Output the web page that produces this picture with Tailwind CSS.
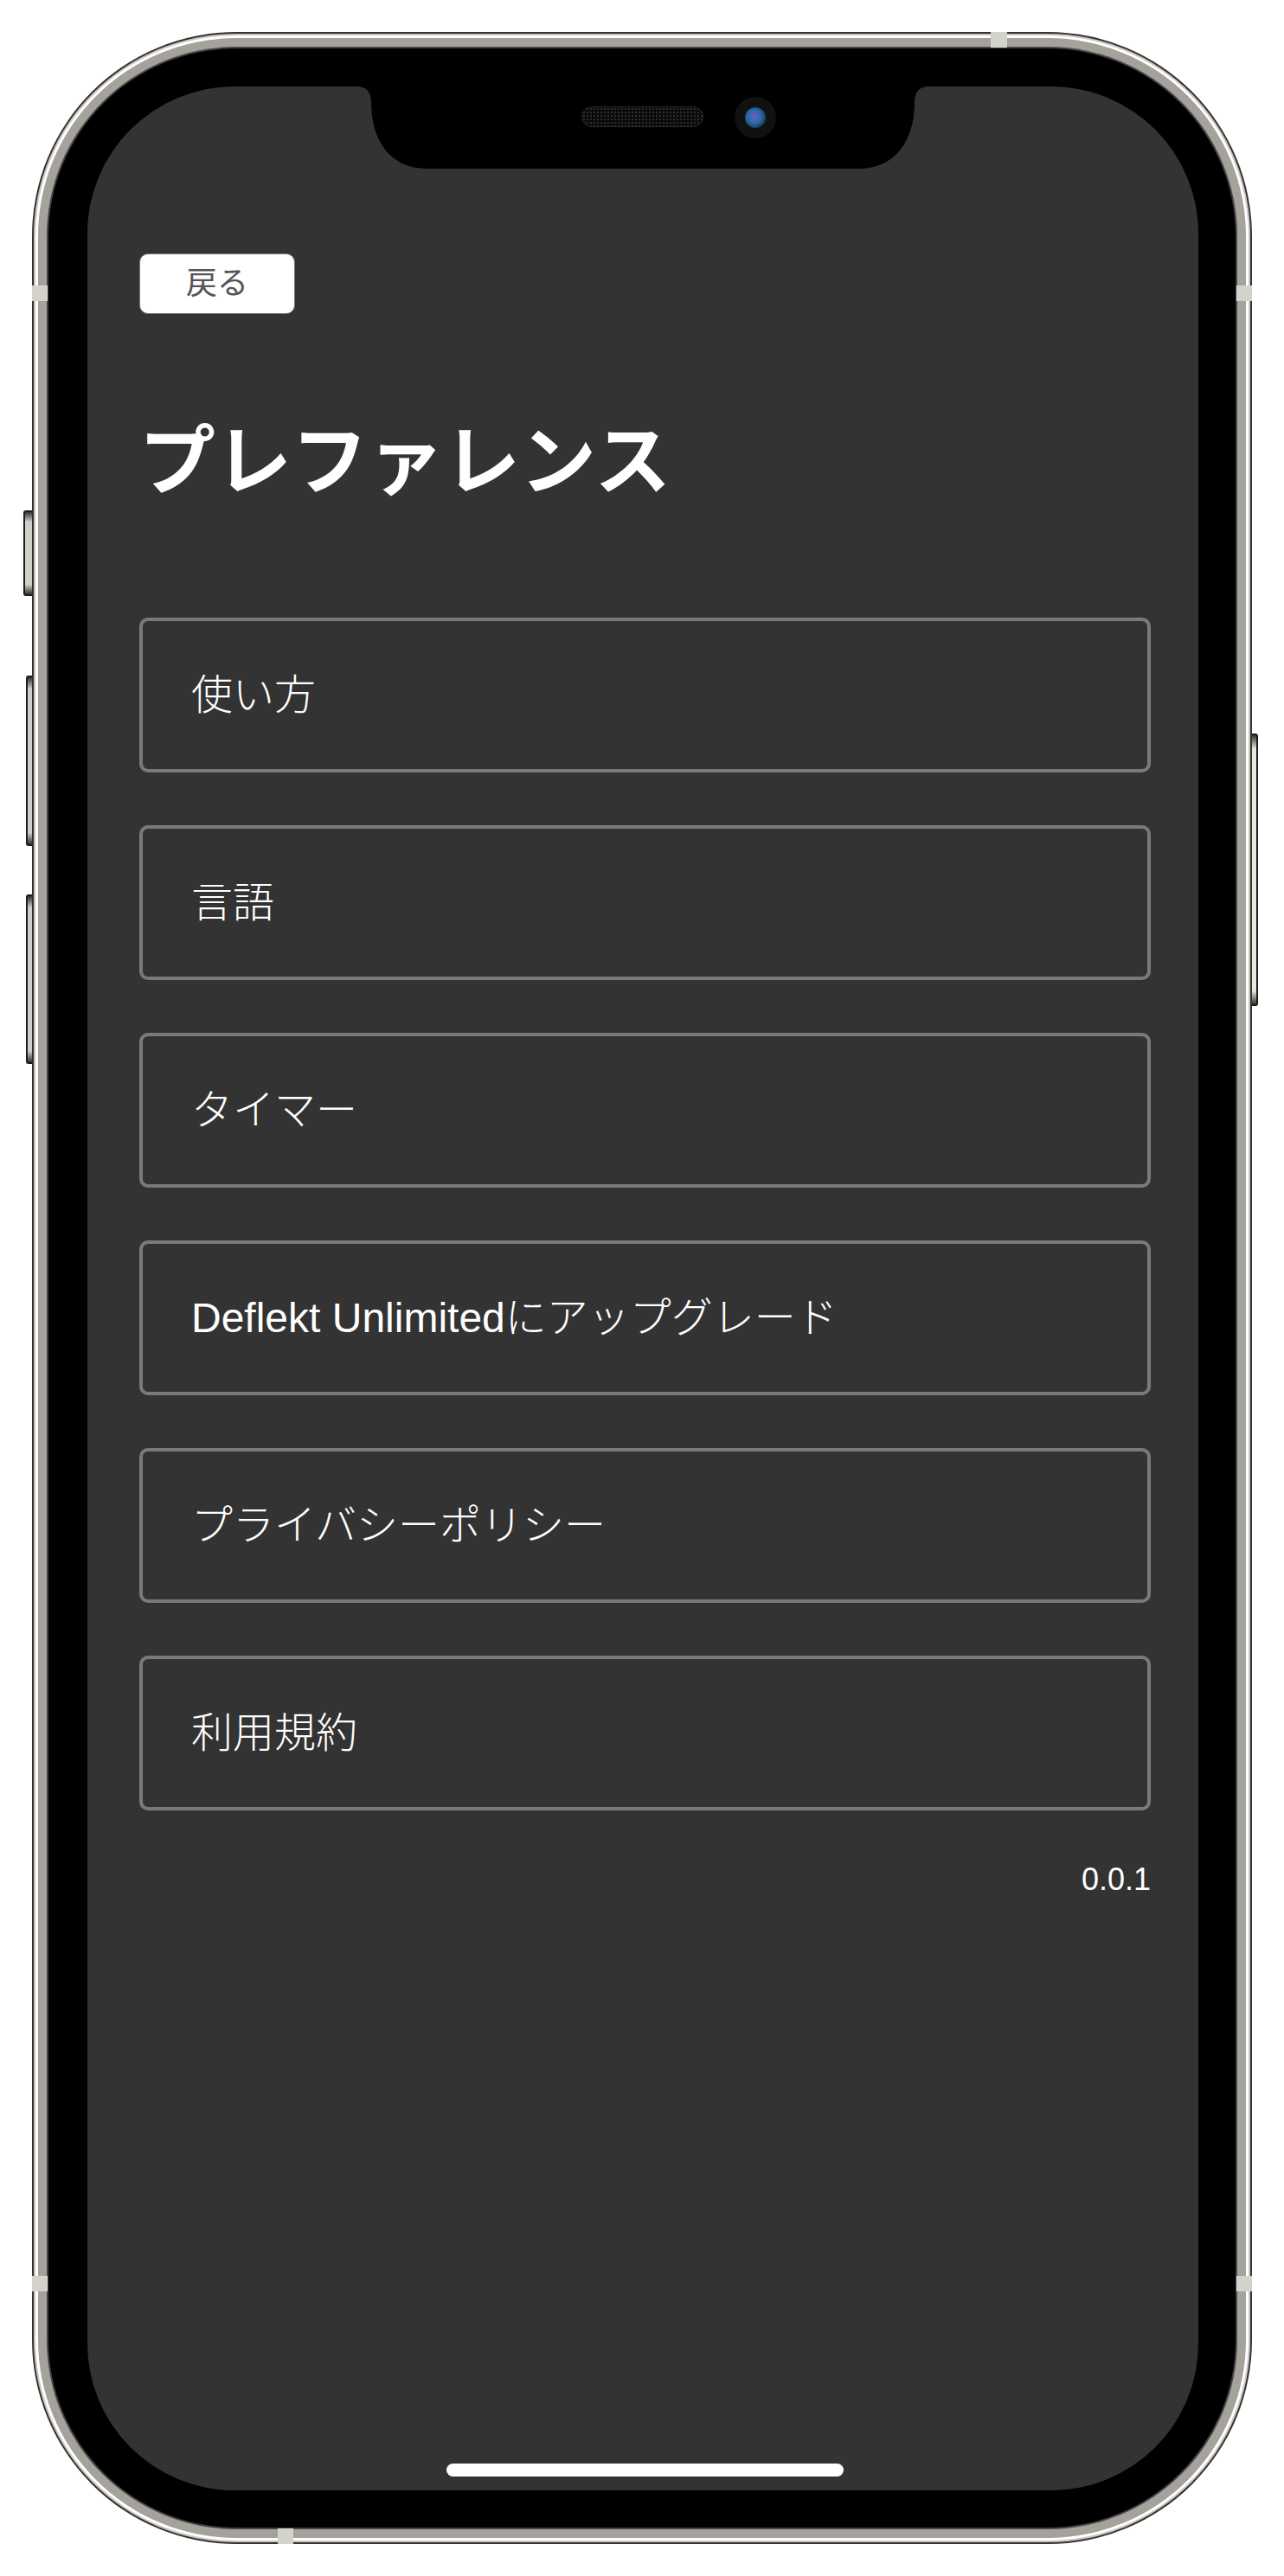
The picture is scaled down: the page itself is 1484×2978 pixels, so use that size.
<!DOCTYPE html>
<html lang="ja">
<head>
<meta charset="UTF-8">
<title>プレファレンス</title>
<script src="https://cdn.jsdelivr.net/npm/@tailwindcss/browser@4"></script>
</head>
<body class="bg-white font-['Liberation_Sans','Noto_Sans_CJK_JP',sans-serif]">
<div class="relative w-[1484px] h-[2978px] p-[37px]">

  <!-- side buttons -->
  <div class="absolute left-[27px] top-[590px] w-[11px] h-[99px] rounded-l-[3px] border-2 border-r-0 border-[#1c1c1a] bg-[linear-gradient(#333_0,#cfcec8_12%,#cfcec8_88%,#333_100%)]"></div>
  <div class="absolute left-[30px] top-[781px] w-[8px] h-[197px] rounded-l-[3px] border-2 border-r-0 border-[#1c1c1a] bg-[linear-gradient(#333_0,#cfcec8_7%,#cfcec8_93%,#333_100%)]"></div>
  <div class="absolute left-[30px] top-[1034px] w-[8px] h-[196px] rounded-l-[3px] border-2 border-r-0 border-[#1c1c1a] bg-[linear-gradient(#333_0,#cfcec8_7%,#cfcec8_93%,#333_100%)]"></div>
  <div class="absolute left-[1446px] top-[848px] w-[8px] h-[315px] rounded-r-[3px] border-2 border-l-0 border-[#1c1c1a] bg-[linear-gradient(#333_0,#e8e7e2_5%,#e8e7e2_95%,#333_100%)]"></div>

  <!-- phone frame -->
  <div class="relative h-full rounded-[236px] bg-[#35342f] p-[2px]">
    <div class="h-full rounded-[234px] bg-[#c9c8c2] p-[2px]">
      <div class="h-full rounded-[232px] bg-white p-[3px]">
        <div class="h-full rounded-[229px] bg-[#a5a29b] p-[10px]">
          <div class="h-full rounded-[219px] bg-[#444] p-[2px]">
            <div class="h-full rounded-[217px] bg-black pl-[45px] pr-[43px] pt-[44px] pb-[43px]">

              <!-- screen -->
              <div class="relative h-full rounded-[170px] bg-[#333] flex flex-col pl-[60px] pr-[55px] pt-[193px] pb-[16px]">

                <!-- notch -->
                <svg class="absolute left-[312px] top-0" width="660" height="95" viewBox="0 0 660 95">
                  <path fill="#000" d="M0 0C10 0 16 6 16 18C16 60 36 95 81 95L579 95C624 95 644 60 644 18C644 6 650 0 660 0Z"/>
                </svg>
                <div class="absolute left-[571px] top-[23px] w-[141px] h-[24px] rounded-full border border-[#262626] bg-[#0a0a0a] bg-[radial-gradient(#2e2e2e_1px,transparent_1px)] bg-[length:4px_4px]"></div>
                <div class="absolute left-[748px] top-[12px] w-[48px] h-[48px] rounded-full bg-[#111] flex items-center justify-center">
                  <div class="w-[24px] h-[24px] rounded-full bg-[radial-gradient(circle_at_45%_45%,#6d5fc0_0,#2d6aa8_40%,#123a5e_75%,#07131f_100%)]"></div>
                </div>

                <button class="w-[180px] h-[70px] rounded-[10px] border border-[#767676] bg-white text-[36px] leading-none text-[#555]">戻る</button>

                <h1 class="mt-[127px] text-[88px] leading-[88px] font-bold text-white">プレファレンス</h1>

                <div class="mt-[136px] flex flex-col gap-[61px]">
                  <div class="h-[179px] rounded-[10px] border-[4px] border-[#7a7a7a] pl-[56px] flex items-center text-[48px] font-light text-white">使い方</div>
                  <div class="h-[179px] rounded-[10px] border-[4px] border-[#7a7a7a] pl-[56px] flex items-center text-[48px] font-light text-white">言語</div>
                  <div class="h-[179px] rounded-[10px] border-[4px] border-[#7a7a7a] pl-[56px] flex items-center text-[48px] font-light text-white">タイマー</div>
                  <div class="h-[179px] rounded-[10px] border-[4px] border-[#7a7a7a] pl-[56px] flex items-center text-[48px] font-light text-white">Deflekt Unlimitedにアップグレード</div>
                  <div class="h-[179px] rounded-[10px] border-[4px] border-[#7a7a7a] pl-[56px] flex items-center text-[48px] font-light text-white">プライバシーポリシー</div>
                  <div class="h-[179px] rounded-[10px] border-[4px] border-[#7a7a7a] pl-[56px] flex items-center text-[48px] font-light text-white">利用規約</div>
                </div>

                <div class="mt-[60px] text-right text-[36px] leading-[40px] text-white">0.0.1</div>

                <div class="mt-auto self-center w-[459px] h-[15px] rounded-full bg-white"></div>
              </div>
            </div>
          </div>
        </div>
      </div>
    </div>

    <!-- antenna bands -->
    <div class="absolute left-0 top-[293px] w-[18px] h-[18px] bg-[#d3d3cb]"></div>
    <div class="absolute right-0 top-[293px] w-[18px] h-[18px] bg-[#d3d3cb]"></div>
    <div class="absolute left-0 bottom-[292px] w-[18px] h-[18px] bg-[#d3d3cb]"></div>
    <div class="absolute right-0 bottom-[292px] w-[18px] h-[18px] bg-[#d3d3cb]"></div>
    <div class="absolute left-[1108px] top-0 w-[19px] h-[18px] bg-[#d3d3cb]"></div>
    <div class="absolute left-[284px] bottom-0 w-[18px] h-[18px] bg-[#d3d3cb]"></div>
  </div>
</div>
</body>
</html>
